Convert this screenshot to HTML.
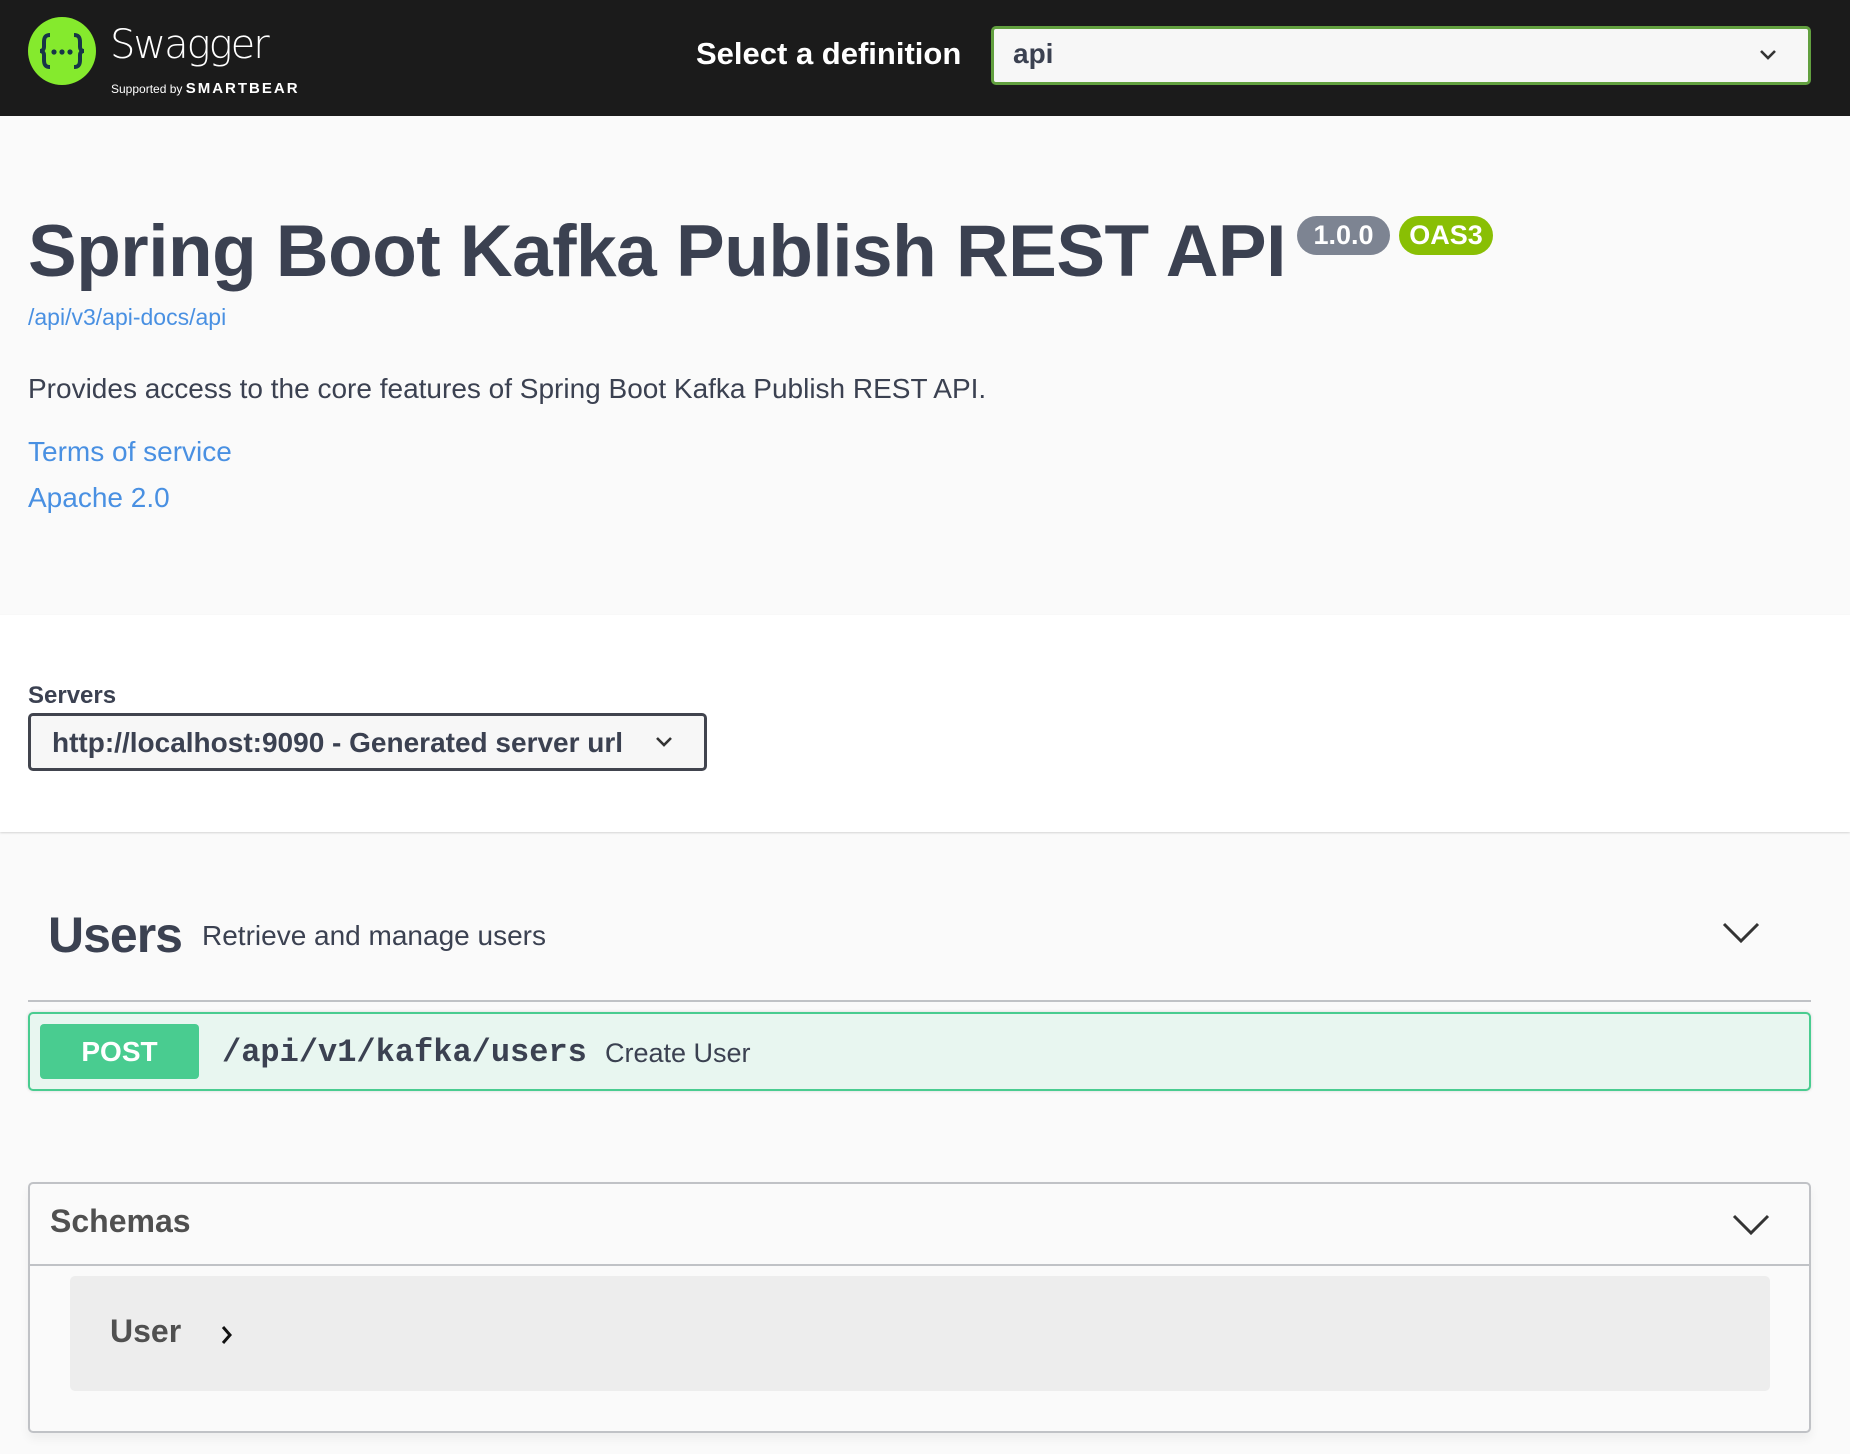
<!DOCTYPE html>
<html><head><meta charset="utf-8"><style>
*{box-sizing:border-box;margin:0;padding:0}
body{width:1850px;height:1454px;overflow:hidden;background:#fafafa;font-family:"Liberation Sans",sans-serif;color:#3b4151;position:relative}
.abs{position:absolute}
</style></head><body>
<div class="abs" style="left:0;top:0;width:1850px;height:116px;background:#1b1b1b"></div>
<svg class="abs" style="left:28px;top:17px" width="68" height="68" viewBox="0 0 68 68"><circle cx="34" cy="34" r="34" fill="#85ea2d"/>
<path d="M22 18c-5 0-6 3-6 7v5c0 2-1 4-4 4 3 0 4 2 4 4v5c0 4 1 7 6 7M46 18c5 0 6 3 6 7v5c0 2 1 4 4 4-3 0-4 2-4 4v5c0 4-1 7-6 7" fill="none" stroke="#173647" stroke-width="4"/>
<circle cx="26" cy="35" r="2.6" fill="#173647"/><circle cx="34" cy="35" r="2.6" fill="#173647"/><circle cx="42" cy="35" r="2.6" fill="#173647"/></svg>
<div class="abs" style="left:110px;top:22px;font-size:40px;color:#fff;letter-spacing:-2px;font-family:'DejaVu Sans',sans-serif;font-weight:300">Swagger</div>
<div class="abs" style="left:111px;top:80px;font-size:12px;color:#fff">Supported by <span style="font-size:15px;letter-spacing:2px;font-weight:bold">SMARTBEAR</span></div>
<div class="abs" style="left:696px;top:36px;font-size:31px;font-weight:bold;color:#fff">Select a definition</div>
<div class="abs" style="left:991px;top:26px;width:820px;height:59px;border:3px solid #62a03f;border-radius:5px;background:#f7f7f7"></div>
<div class="abs" style="left:1013px;top:38px;font-size:28px;font-weight:bold;color:#3b4151">api</div>
<svg class="abs" style="left:1758px;top:48px" width="20" height="14"><path d="M3 3l7 7 7-7" fill="none" stroke="#333" stroke-width="2.6"/></svg>

<div class="abs" style="left:28px;top:210px;font-size:73px;font-weight:bold;letter-spacing:-0.5px;white-space:nowrap">Spring Boot Kafka Publish REST API</div>
<div class="abs" style="left:1297px;top:216px;width:93px;height:39px;border-radius:20px;background:#7d8492;color:#fff;font-size:27px;font-weight:bold;text-align:center;line-height:39px">1.0.0</div>
<div class="abs" style="left:1399px;top:216px;width:94px;height:39px;border-radius:20px;background:#89bf04;color:#fff;font-size:27px;font-weight:bold;text-align:center;line-height:39px">OAS3</div>
<div class="abs" style="left:28px;top:304px;font-size:23px;color:#4990e2">/api/v3/api-docs/api</div>
<div class="abs" style="left:28px;top:373px;font-size:28px">Provides access to the core features of Spring Boot Kafka Publish REST API.</div>
<div class="abs" style="left:28px;top:436px;font-size:28px;color:#4990e2">Terms of service</div>
<div class="abs" style="left:28px;top:482px;font-size:28px;color:#4990e2">Apache 2.0</div>

<div class="abs" style="left:0;top:615px;width:1850px;height:217px;background:#fff;box-shadow:0 1px 2px rgba(0,0,0,.15)"></div>
<div class="abs" style="left:28px;top:682px;font-size:24px;font-weight:bold">Servers</div>
<div class="abs" style="left:28px;top:713px;width:679px;height:58px;border:3px solid #41444e;border-radius:5px;background:#f7f7f7"></div>
<div class="abs" style="left:52px;top:727px;font-size:28px;font-weight:bold;white-space:nowrap">http://localhost:9090 - Generated server url</div>
<svg class="abs" style="left:654px;top:735px" width="20" height="14"><path d="M3 3l7 7 7-7" fill="none" stroke="#333" stroke-width="2.6"/></svg>

<div class="abs" style="left:48px;top:906px;font-size:50px;font-weight:bold;letter-spacing:-1px">Users</div>
<div class="abs" style="left:202px;top:920px;font-size:28px">Retrieve and manage users</div>
<svg class="abs" style="left:1721px;top:920px" width="40" height="26"><path d="M3 4l17 17 17-17" fill="none" stroke="#333" stroke-width="3"/></svg>
<div class="abs" style="left:28px;top:1000px;width:1783px;height:2px;background:rgba(59,65,81,.3)"></div>
<div class="abs" style="left:28px;top:1012px;width:1783px;height:79px;border:2px solid #49cc90;border-radius:5px;background:#e8f6f0;box-shadow:0 0 3px rgba(0,0,0,.15)"></div>
<div class="abs" style="left:40px;top:1024px;width:159px;height:55px;border-radius:4px;background:#49cc90;color:#fff;font-size:28px;font-weight:bold;text-align:center;line-height:55px">POST</div>
<div class="abs" style="left:222px;top:1034px;font-family:'Liberation Mono',monospace;font-size:32px;font-weight:bold;white-space:nowrap">/api/v1/kafka/users</div>
<div class="abs" style="left:605px;top:1038px;font-size:27px">Create User</div>

<div class="abs" style="left:28px;top:1182px;width:1783px;height:251px;border:2px solid rgba(59,65,81,.3);border-radius:5px;box-shadow:0 6px 10px rgba(0,0,0,.05)"></div>
<div class="abs" style="left:50px;top:1203px;font-size:32px;font-weight:bold;color:#505050">Schemas</div>
<svg class="abs" style="left:1731px;top:1212px" width="40" height="26"><path d="M3 4l17 17 17-17" fill="none" stroke="#333" stroke-width="3"/></svg>
<div class="abs" style="left:30px;top:1264px;width:1779px;height:2px;background:rgba(59,65,81,.3)"></div>
<div class="abs" style="left:70px;top:1276px;width:1700px;height:115px;border-radius:5px;background:#ededed"></div>
<div class="abs" style="left:110px;top:1313px;font-size:32px;font-weight:bold;color:#505050">User</div>
<svg class="abs" style="left:220px;top:1323px" width="14" height="24"><path d="M3 4l7 8-7 8" fill="none" stroke="#111" stroke-width="3"/></svg>
</body></html>
